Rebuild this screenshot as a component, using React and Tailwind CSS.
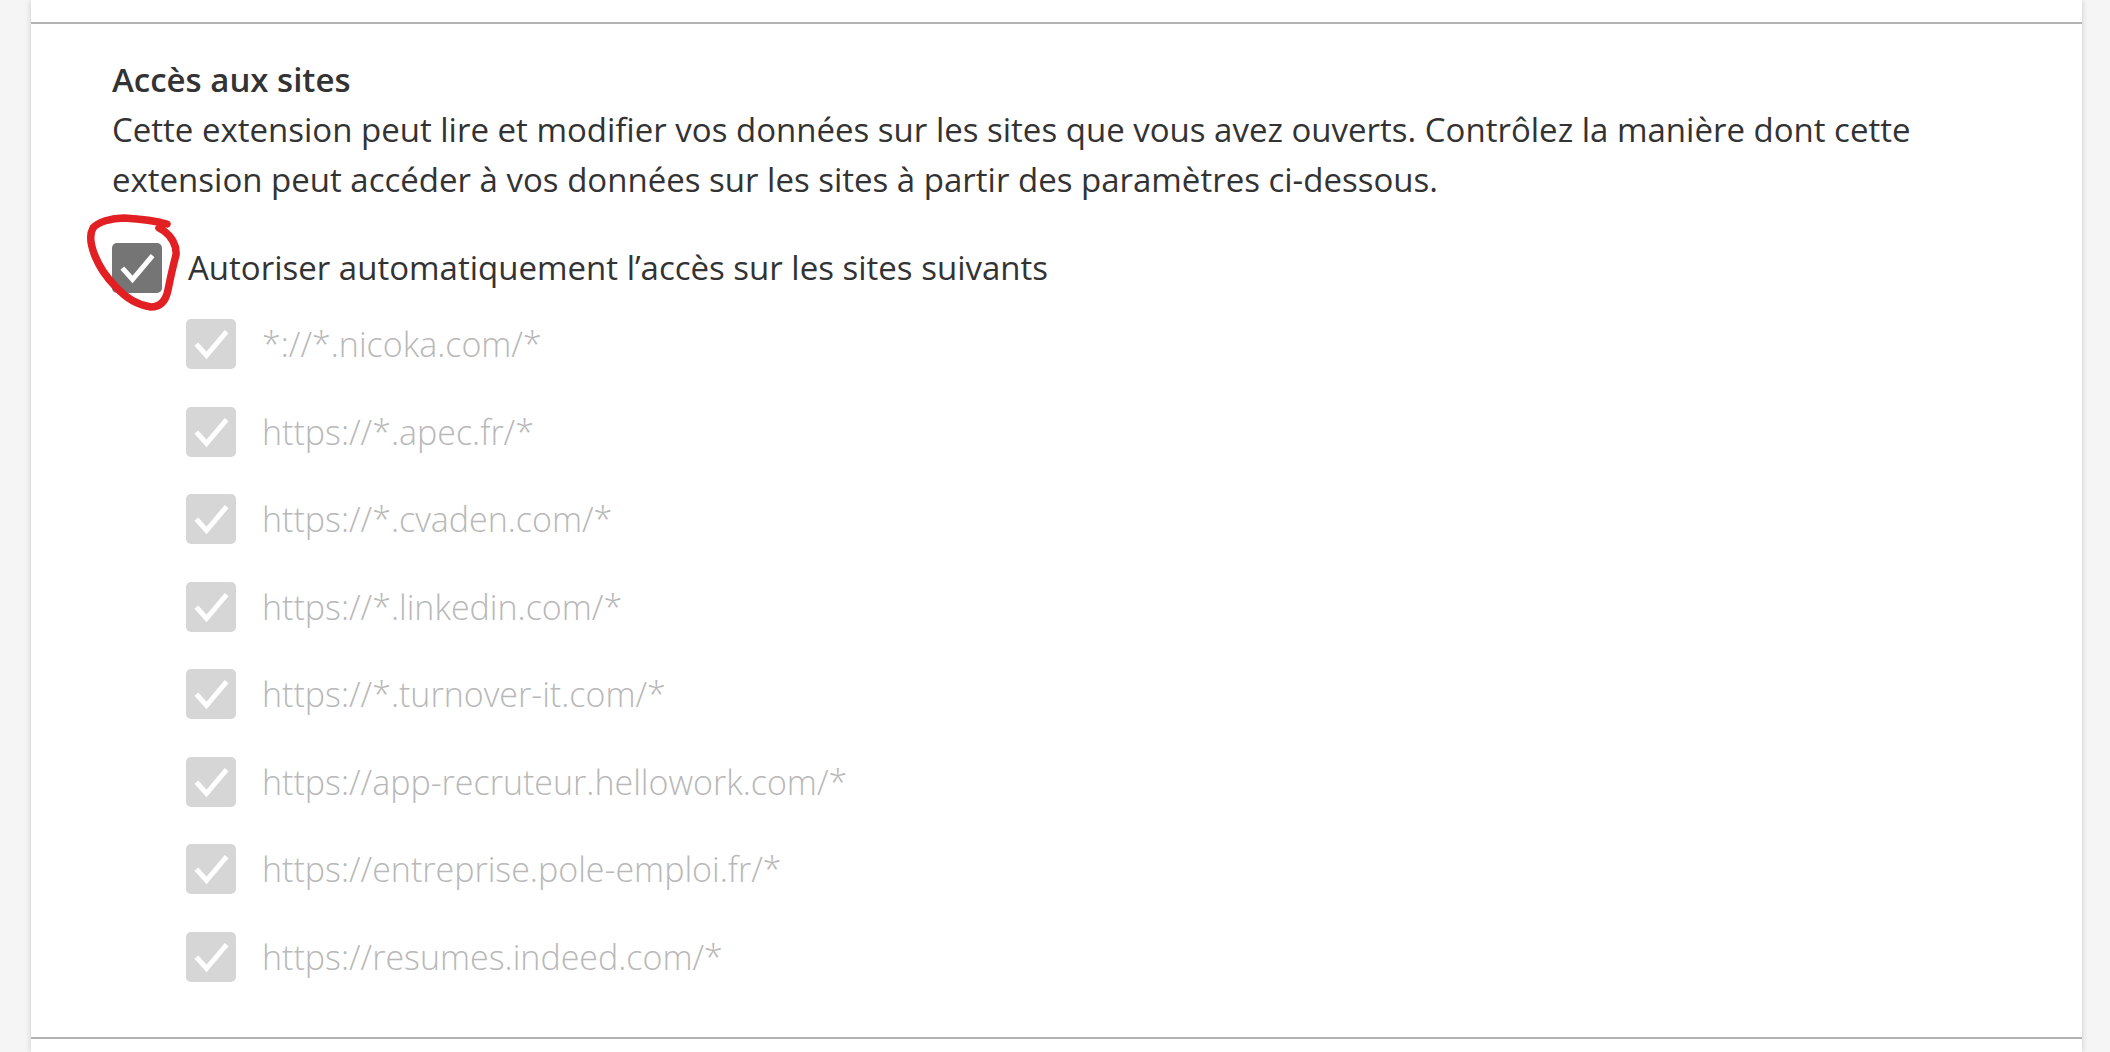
import React from "react";

const sites = [
  "*://*.nicoka.com/*",
  "https://*.apec.fr/*",
  "https://*.cvaden.com/*",
  "https://*.linkedin.com/*",
  "https://*.turnover-it.com/*",
  "https://app-recruteur.hellowork.com/*",
  "https://entreprise.pole-emploi.fr/*",
  "https://resumes.indeed.com/*",
];

const Check = ({ color }) => (
  <div className={`w-[50px] h-[50px] rounded-[5px] shrink-0 flex items-center justify-center ${color}`}>
    <svg width="50" height="50" viewBox="0 0 50 50">
      <path d="M12 27 L20.5 36.5 L39 14.5" fill="none" stroke="#fff" strokeWidth="5" strokeLinecap="square" />
    </svg>
  </div>
);

const App = () => {
  return (
    <div className="min-h-screen w-full bg-[#f5f5f5] font-['Open_Sans',sans-serif]">
      <div className="ml-[31px] w-[2051px] h-[1052px] bg-white shadow-[0_0_6px_rgba(0,0,0,0.18)] pt-[22px]">
        <div className="h-[2px] bg-[#b3b3b3]" />

        {/* Site access section */}
        <section className="h-[1013px] pl-[81px] pt-[31px]">
          <h2 className="text-[33px] leading-[50px] font-semibold text-[#333]">Accès aux sites</h2>
          <p className="text-[33px] leading-[50px] text-[#333] max-w-[1880px]">
            Cette extension peut lire et modifier vos données sur les sites que vous avez ouverts. Contrôlez la manière dont cette extension peut accéder à vos données sur les sites à partir des paramètres ci-dessous.
          </p>

          <div className="relative mt-[38px] flex items-center gap-[26px]">
            <Check color="bg-[#757575]" />
            <span className="text-[33px] leading-[50px] text-[#333]">
              Autoriser automatiquement l’accès sur les sites suivants
            </span>
            {/* red hand-drawn annotation */}
            <svg className="absolute left-[-31px] top-[-33px] pointer-events-none" width="110" height="110" viewBox="80 210 110 110">
              <path
                d="M166 224 C155 221 140 219 123 218 C110 218 97 222 92 228 C88 235 90 246 94 256 C98 266 106 278 115 287 C124 297 135 305 150 307 C160 307 165 300 167 290 C169 280 172 266 175 255 C176 245 170 236 163 231 C160 229 158 228 158 228"
                fill="none"
                stroke="#e21f23"
                strokeWidth="7.5"
                strokeLinecap="round"
                strokeLinejoin="round"
              />
            </svg>
          </div>

          <div className="mt-[26px] ml-[74px] flex flex-col gap-[37.5px]">
            {sites.map((site) => (
              <div key={site} className="flex items-center gap-[26px] h-[50px]">
                <Check color="bg-[#d6d6d6]" />
                <span className="text-[34px] leading-[50px] font-light text-[#b8b8b8]">{site}</span>
              </div>
            ))}
          </div>
        </section>

        <div className="h-[2px] bg-[#b3b3b3]" />
      </div>
    </div>
  );
};

export default App;
